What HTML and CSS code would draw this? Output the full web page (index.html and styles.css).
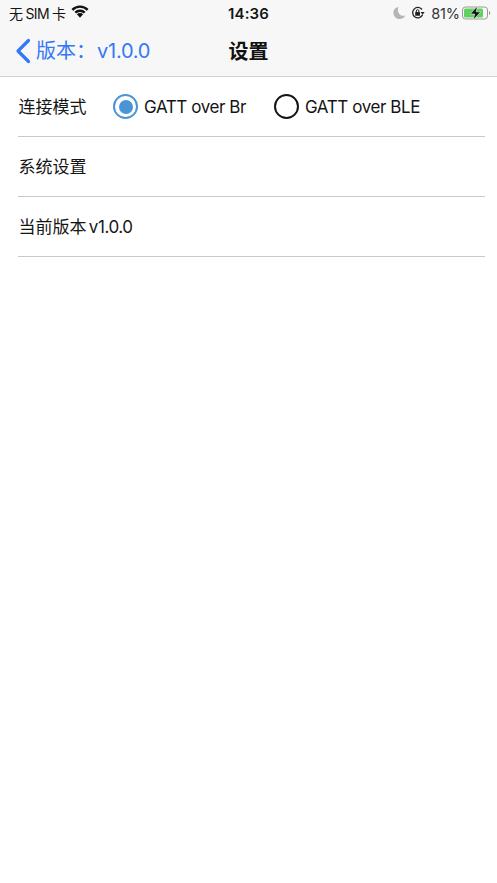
FILE: index.html
```html
<!DOCTYPE html>
<html lang="zh-CN">
<head>
<meta charset="utf-8">
<title>设置</title>
<link rel="stylesheet" href="styles.css">
</head>
<body>
<header class="top">
  <div class="status">
    <div class="status-left">
      <span class="carrier">无 SIM 卡</span>
      <svg class="wifi" width="18" height="13" viewBox="0 0 18 13"><path class="wifi-arc" d="M1.300 4.800a10.900 10.900 0 0 1 15.400 0"/><path class="wifi-arc" d="M4.300 7.700a6.600 6.600 0 0 1 9.400 0"/><path d="M9 8.100c-1.200 0-2.300.4-3.100 1.200L9 12.800l3.100-3.500c-.8-.8-1.900-1.200-3.100-1.200z"/></svg>
    </div>
    <div class="clock">14:36</div>
    <div class="status-right">
      <svg class="moon" width="13" height="14" viewBox="0 0 13 14"><path d="M5.400 1C2.500 1.400.4 3.900.4 6.800c0 3.500 2.700 6.300 6.200 6.300 2.500 0 4.700-1.400 5.800-3.600-.5.200-1.100.3-1.700.3-3.300 0-5.800-2.700-5.800-5.900 0-1 .2-2 .5-2.900z"/></svg>
      <svg class="lock" width="14" height="14" viewBox="0 0 14 14"><path class="lock-ring" d="M11.600 8.800A5.200 5.200 0 1 1 11 3.500"/><path d="M13.600 6h-4l2 2.800z"/><rect x="4.200" y="6" width="4.800" height="3.800" rx=".5"/><path class="lock-ring thin" d="M5.300 6V5a1.300 1.300 0 0 1 2.600 0v1"/></svg>
      <span class="percent">81%</span>
      <svg class="battery" width="29" height="14" viewBox="0 0 29 14"><rect class="battery-shell" x=".5" y="1" width="25" height="12" rx="3"/><rect class="battery-fill" x="2" y="2.500" width="19" height="9" rx="1.500"/><path class="battery-cap" d="M27 5c.8.300 1.200 1 1.200 2s-.4 1.700-1.200 2z"/><path class="battery-bolt" d="M15.500 0 8.300 8h4.400L11.300 14l7.400-8.200h-4.500z"/></svg>
    </div>
  </div>
  <nav class="nav">
    <a class="back">
      <svg width="16" height="26" viewBox="0 0 16 26"><path class="chevron" d="M13.500 2.500 3 13l10.500 10.500"/></svg>
      <span>版本：<span class="version">v1.0.0</span></span>
    </a>
    <h1 class="title">设置</h1>
  </nav>
</header>
<main class="list">
  <div class="row">
    <span class="mode-label cjk">连接模式</span>
    <label class="radio"><span class="dot on"></span><span class="lat">GATT over Br</span></label>
    <label class="radio"><span class="dot"></span><span class="lat">GATT over BLE</span></label>
  </div>
  <div class="row"><span class="cjk">系统设置</span></div>
  <div class="row"><span class="cjk mixed">当前版本 <span class="lat">v1.0.0</span></span></div>
</main>
</body>
</html>
```
FILE: styles.css
```css
* { box-sizing: border-box; }
html, body { margin: 0; height: 100%; background: #fff; }
body {
  font-family: Inter, "Noto Sans CJK SC", sans-serif;
  color: #151515;
  font-size: 17px;
}
.top {
  height: 77px;
  background: #f7f7f7;
  border-bottom: 1px solid #d2d2d2;
}
.status {
  height: 26px;
  display: grid;
  grid-template-columns: 1fr auto 1fr;
  align-items: center;
  padding: 0 6px 0 9px;
  font-size: 14px;
}
.status-left { display: flex; align-items: center; gap: 6px; }
.carrier { font-size: 14px; letter-spacing: -0.7px; }
.wifi { fill: #111; margin-bottom: 3px; }
.wifi-arc { fill: none; stroke: #111; stroke-width: 2.400; }
.clock { font-weight: 600; font-size: 15px; letter-spacing: 0.1px; margin-right: 3px; }
.status-right { display: flex; align-items: center; justify-content: flex-end; }
.moon { fill: #b5b5b5; margin-right: 5px; }
.lock { fill: #222; margin-right: 6px; }
.lock-ring { fill: none; stroke: #222; stroke-width: 1.300; }
.lock-ring.thin { stroke-width: 1; }
.percent { margin-right: 2px; font-size: 14.500px; letter-spacing: -0.1px; color: #333; }
.battery-shell { fill: none; stroke: #999; }
.battery-fill { fill: #5dd25f; }
.battery-cap { fill: #999; }
.battery-bolt { fill: #111; stroke: #f7f7f7; stroke-width: .6; }
.nav {
  height: 50px;
  position: relative;
  display: flex;
  align-items: center;
  justify-content: center;
}
.back {
  position: absolute;
  left: 15px;
  top: 12px;
  display: flex;
  align-items: center;
  gap: 5px;
  color: #3478f6;
  font-size: 20px;
  line-height: 26px;
}
.version { letter-spacing: -0.25px; margin-left: 1px; }
.chevron { fill: none; stroke: #3478f6; stroke-width: 3.200; stroke-linecap: round; stroke-linejoin: round; }
.title { margin: 0 0 1px; font-size: 20px; font-weight: 600; color: #111; }
.list { padding: 0 12px 0 18px; }
.row {
  height: 60px;
  display: flex;
  align-items: center;
  border-bottom: 1px solid #c9c9c9;
  padding-left: 0.5px;
}
.cjk { margin-bottom: 2px; }
.mode-label { width: 94.5px; }
.lat { letter-spacing: -0.42px; }
.mixed { word-spacing: -2.500px; }
.radio { display: flex; align-items: center; gap: 6px; margin-right: 28px; }
.dot {
  width: 25px;
  height: 25px;
  border-radius: 50%;
  border: 2px solid #151515;
  display: flex;
  align-items: center;
  justify-content: center;
}
.dot.on { border-color: #4a95d8; }
.dot.on::after {
  content: "";
  width: 14px;
  height: 14px;
  border-radius: 50%;
  background: #4a95d8;
}
```
